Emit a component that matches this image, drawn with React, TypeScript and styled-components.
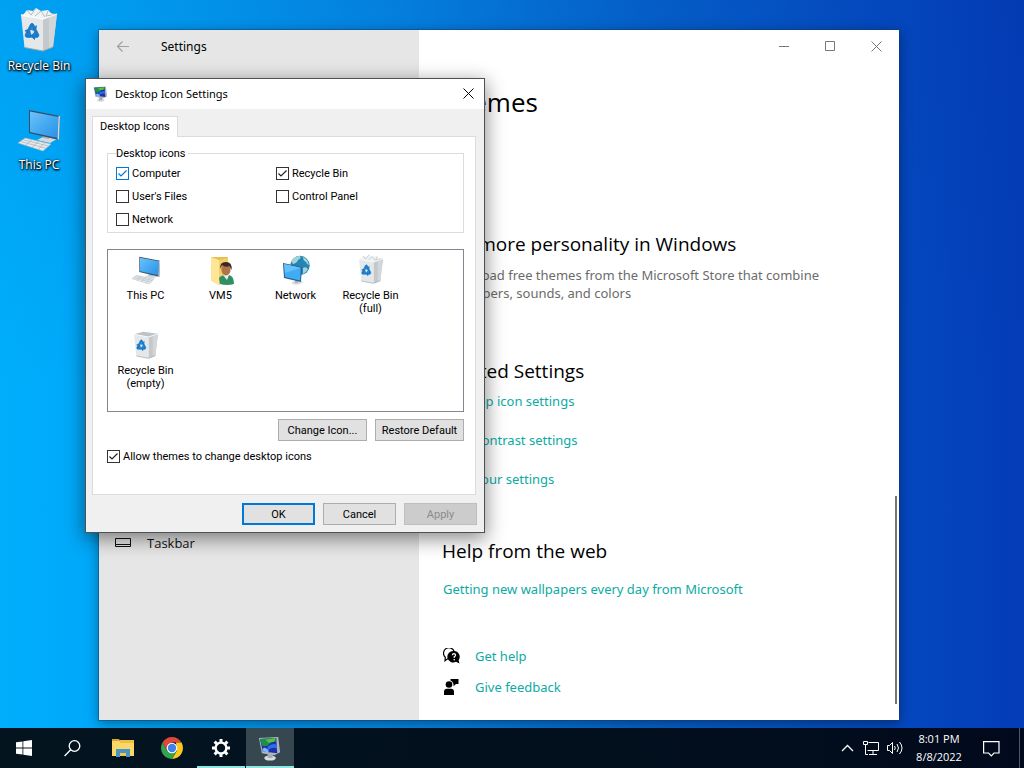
import React from 'react';
import styled, { createGlobalStyle, css } from 'styled-components';

const GlobalStyle = createGlobalStyle`
  *, *::before, *::after { box-sizing: border-box; }
  body { margin: 0; }
  button, input { font: inherit; }
`;

const uiFont = `'Noto Sans', 'Open Sans', sans-serif`;
const headingFont = `'Open Sans', 'Noto Sans', sans-serif`;
const dialogFont = `Roboto, 'Liberation Sans', sans-serif`;

/* ---------- Desktop ---------- */

const Desktop = styled.div`
  min-height: 100vh;
  display: flex;
  flex-direction: column;
  overflow: hidden;
  font-family: ${uiFont};
  font-size: 12px;
  color: #000;
  background:
    linear-gradient(180deg, rgba(0, 50, 150, 0.1) 0%, rgba(0, 50, 150, 0) 50%),
    linear-gradient(90deg, #00aefc 0%, #00a6f8 12%, #0488e6 38%, #0560cc 65%, #0448c0 88%, #033cb6 100%);
`;

const Workspace = styled.main`
  position: relative;
  flex: 1;
`;

const Shortcuts = styled.nav`
  display: flex;
  flex-direction: column;
  gap: 30px;
  width: 78px;
  padding-top: 7px;
`;

const Shortcut = styled.button`
  display: flex;
  flex-direction: column;
  align-items: center;
  gap: 0;
  padding: 0;
  border: 0;
  background: none;
  color: #fff;
  font-family: ${headingFont};
  font-size: 12px;
  line-height: 21px;
  text-shadow: 0 1px 2px #000, 1px 1px 2px #000, 0 0 3px rgba(0, 0, 0, 0.7);
`;

/* ---------- Settings window ---------- */

const SettingsWindow = styled.section`
  position: absolute;
  top: 30px;
  right: 125px;
  bottom: 8px;
  left: 99px;
  display: flex;
  background: #fff;
  box-shadow: 0 0 0 1px rgba(20, 60, 110, 0.45), 0 3px 12px rgba(0, 0, 0, 0.4);
`;

const Sidebar = styled.div`
  display: flex;
  flex-direction: column;
  justify-content: space-between;
  width: 320px;
  background: #e6e6e6;
`;

const SidebarHeader = styled.header`
  display: flex;
  align-items: center;
  gap: 30px;
  height: 33px;
  padding-left: 16px;
`;

const IconButton = styled.button`
  display: grid;
  place-items: center;
  padding: 0;
  border: 0;
  background: none;
  color: inherit;
`;

const WindowTitle = styled.span<{ $size: number }>`
  font-size: ${(p) => p.$size}px;
  line-height: 16px;
`;

const SidebarItem = styled.a`
  display: flex;
  align-items: center;
  gap: 15px;
  margin-bottom: 167px;
  padding-left: 16px;
  color: #111;
  font-family: ${headingFont};
  font-size: 13px;
  line-height: 20px;
  text-decoration: none;
`;

const Content = styled.div`
  position: relative;
  flex: 1;
`;

const Caption = styled.div`
  display: flex;
  justify-content: flex-end;
  color: #777;
`;

const CaptionButton = styled(IconButton)`
  width: 46px;
  height: 32px;
`;

const Page = styled.div`
  padding: 22px 23px 0;
`;

const PageTitle = styled.h1`
  margin: 0 0 110px;
  font-family: ${headingFont};
  font-size: 26px;
  font-weight: 400;
  line-height: 36px;
`;

const Section = styled.section<{ $space: number }>`
  display: flex;
  flex-direction: column;
  align-items: flex-start;
  margin-bottom: ${(p) => p.$space}px;
`;

const Heading = styled.h2<{ $space: number }>`
  margin: 0 0 ${(p) => p.$space}px;
  font-family: ${headingFont};
  font-size: 19px;
  font-weight: 400;
  line-height: 28px;
`;

const Text = styled.p`
  max-width: 400px;
  margin: 0;
  padding-left: 1px;
  color: #6b6b6b;
  font-size: 13px;
  line-height: 18px;
`;

const LinkList = styled.div<{ $gap: number }>`
  display: flex;
  flex-direction: column;
  align-items: flex-start;
  gap: ${(p) => p.$gap}px;
`;

const Link = styled.a`
  display: flex;
  align-items: center;
  gap: 15px;
  padding-left: 1px;
  color: #0caba3;
  font-size: 13px;
  line-height: 20px;
  text-decoration: none;
`;

const ScrollThumb = styled.div`
  position: absolute;
  right: 2px;
  bottom: 16px;
  width: 2px;
  height: 208px;
  background: #767676;
`;

/* ---------- Dialog ---------- */

const Dialog = styled.section`
  position: absolute;
  top: 78px;
  left: 85px;
  width: 400px;
  border: 1px solid #4c5155;
  background: #f0f0f0;
  box-shadow: 0 5px 18px 1px rgba(0, 0, 0, 0.45);
  font-family: ${dialogFont};
  font-size: 11px;
  line-height: 13px;
`;

const DialogHeader = styled.header`
  display: flex;
  align-items: center;
  gap: 6px;
  height: 30px;
  padding: 0 10px 1px 7px;
  background: #fff;
  font-family: ${uiFont};

  ${IconButton} {
    margin-left: auto;
  }
`;

const DialogBody = styled.div`
  padding: 7px 8px 7px 6px;
`;

const Tab = styled.button`
  position: relative;
  display: block;
  height: 21px;
  margin-bottom: -1px;
  padding: 0 7px 1px;
  border: 1px solid #dcdcdc;
  border-bottom: 0;
  background: #fff;
`;

const Panel = styled.div`
  padding: 10px 11px 31px 14px;
  border: 1px solid #dcdcdc;
  background: #fff;
`;

const Group = styled.fieldset`
  display: grid;
  grid-template-columns: 160px 1fr;
  row-gap: 10px;
  margin: 0 0 16px;
  padding: 7px 8px 6px;
  border: 1px solid #dcdcdc;
`;

const Legend = styled.legend`
  padding: 0 3px 0 0;
  line-height: 13px;
`;

const CheckLabel = styled.label`
  display: flex;
  align-items: center;
  gap: 3px;
`;

const CheckBoxFrame = styled.span`
  display: grid;
  width: 13px;
  height: 13px;

  > * {
    grid-area: 1 / 1;
    margin: 0;
    pointer-events: none;
  }
`;

const CheckInput = styled.input<{ $hot: boolean }>`
  width: 13px;
  height: 13px;
  appearance: none;
  border: 1px solid ${(p) => (p.$hot ? '#0078d7' : '#333')};
  background: #fff;
`;

const IconList = styled.ul`
  display: grid;
  grid-template-columns: repeat(4, 75px);
  grid-auto-rows: 75px;
  min-height: 163px;
  margin: 0 0 7px;
  padding: 4px 0 0;
  border: 1px solid #828790;
  list-style: none;
`;

const IconItem = styled.li`
  display: flex;
  flex-direction: column;
  align-items: center;
  gap: 3px;
  text-align: center;
`;

const ButtonRow = styled.div`
  display: flex;
  justify-content: flex-end;
  gap: 8px;
`;

const PushButton = styled.button<{ $width: number; $primary?: boolean }>`
  width: ${(p) => p.$width}px;
  height: 22px;
  padding: 0;
  border: 1px solid #adadad;
  background: #e1e1e1;
  color: #000;

  ${(p) =>
    p.$primary &&
    css`
      border: 2px solid #0078d7;
    `}

  &:disabled {
    border-color: #bfbfbf;
    background: #ccc;
    color: #8b8b8b;
  }
`;

const AllowRow = styled.div`
  display: flex;
  margin-top: 9px;
`;

const DialogFooter = styled(ButtonRow)`
  padding-top: 8px;
  margin-right: -1px;
`;

/* ---------- Taskbar ---------- */

const Taskbar = styled.footer`
  position: relative;
  display: flex;
  justify-content: space-between;
  height: 40px;
  background: linear-gradient(90deg, #03141f, #020f1d 60%, #010a1c);
  color: #fff;
`;

const TaskGroup = styled.div`
  display: flex;
`;

const RunningApps = styled.div`
  display: flex;
  gap: 1px;
  margin-left: 3px;
`;

const TaskButton = styled(IconButton)<{ $running?: boolean; $active?: boolean }>`
  width: 48px;
  height: 40px;
  border-bottom: 2px solid ${(p) => (p.$running ? '#8fe6e2' : 'transparent')};
  border-top: 2px solid transparent;
  background: ${(p) => (p.$active ? '#37474f' : 'none')};
`;

const Tray = styled.div`
  display: flex;
  align-items: center;
`;

const TrayButton = styled(IconButton)`
  width: 24px;
  height: 40px;
`;

const Clock = styled.time`
  width: 64px;
  font-family: ${headingFont};
  font-size: 11px;
  line-height: 18px;
  text-align: center;
`;

const Notifications = styled(IconButton)`
  width: 40px;
  height: 40px;
  margin-right: 8px;
`;

const PeekEdge = styled.span`
  width: 5px;
  height: 40px;
  border-left: 1px solid #4a5663;
`;

/* ---------- Drawings ---------- */

const RecycleArrow = () => (
  <path d="M-3.4 -2.6 L-1.2 -6.4 Q0 -7.6 1.2 -6.4 L2.6 -4.2 L4 -5 L3.4 -0.8 L-0.8 -2 L0.6 -2.9 L0 -4 L-1.2 -1.6 Z" />
);

const RecycleBinIcon = ({ size, full = false }: { size: number; full?: boolean }) => (
  <svg width={size} height={size} viewBox="0 0 48 48" aria-hidden="true">
    <path d="M6 8 L20 4 L42 7 L28 12 Z" fill="#bcc2c6" />
    {full && (
      <g>
        <path d="M8 8 L12 3 L18 4 L21 1 L26 4 L33 3 L38 8 L30 13 L16 11 Z" fill="#f0f3f4" />
        <path d="M12 3 L16 8 L21 1 M20 9 L26 4 L30 10 M33 4 L31 9 L38 8" fill="none" stroke="#b5bcc1" strokeWidth="1" />
      </g>
    )}
    <path d="M6 8 L28 12 L28 44 L9.500 40.500 Z" fill="#e5e8ea" />
    <path d="M28 12 L42 7 L38 40 L28 44 Z" fill="#c3c8cc" />
    <path d="M34 10 L42 7 L38 40 L34 41.500 Z" fill="#d2d6d9" />
    <path d="M6 8 L28 12 L42 7" fill="none" stroke="#f8fafb" strokeWidth="1.300" />
    <path d="M9.500 40.500 L28 44 L38 40" fill="none" stroke="#9da3a8" strokeWidth="1" />
    <g transform="translate(17 25) scale(1.100 1.250)" fill="#1979c9" stroke="#1979c9" strokeWidth=".7">
      <RecycleArrow />
      <g transform="rotate(120)"><RecycleArrow /></g>
      <g transform="rotate(240)"><RecycleArrow /></g>
    </g>
  </svg>
);

const ComputerIcon = ({ size }: { size: number }) => (
  <svg width={size} height={size} viewBox="0 0 48 48" aria-hidden="true">
    <defs>
      <linearGradient id={`pc${size}`} x1="0" y1="0" x2="1" y2="1">
        <stop offset="0" stopColor="#6fc2f8" />
        <stop offset=".5" stopColor="#46aaf2" />
        <stop offset="1" stopColor="#2a90e4" />
      </linearGradient>
    </defs>
    <path d="M22 34 L30 30 L42 33 L35 37 Z" fill="#d5dade" />
    <path d="M28 28 L34 29 L34 33 L28 32 Z" fill="#aab2b8" />
    <path d="M14 4 L45 10 L44 34 L14 27 Z" fill="#34506a" />
    <path d="M15 5.500 L43.500 11 L42.500 32 L15 26 Z" fill={`url(#pc${size})`} />
    <path d="M45 10 L44 34 L42.500 33 L43.500 10 Z" fill="#cfd6db" />
    <path d="M10 32 L36 38 L28 45 L3 37 Z" fill="#e6eaed" stroke="#a7b0b6" strokeWidth=".6" />
    <path d="M8 33.700 L33.500 40 M5.500 35.500 L31 42.300 M17 33.500 L10.500 39.500 M24 35 L17 41.500 M30 36.700 L23 43.500" stroke="#a7b0b6" strokeWidth=".7" />
  </svg>
);

const UserFolderIcon = () => (
  <svg width="32" height="32" viewBox="0 0 32 32" aria-hidden="true">
    <path d="M6 3 L23 3 L23 27 L12 27 Z" fill="#e9bf4f" />
    <path d="M6 3 L14 6 L14 31 L6 27 Z" fill="#ffe596" />
    <path d="M14 6 L23 4 L23 26 L14 31 Z" fill="#f4d06c" />
    <path d="M14 24 Q18 20 24 21 Q29 22 29 30 Q22 32 15 30 Z" fill="#2f8f63" />
    <path d="M18 21 L22 26 L24 21 Z" fill="#e9f1ec" />
    <ellipse cx="21" cy="15.500" rx="4.600" ry="6" fill="#b0744a" />
    <path d="M15.500 15 Q14 8 21 8 Q27.500 8 26.500 16 L24.500 12 Q20 14 17 11 Z" fill="#3a2a20" />
  </svg>
);

const NetworkPlaceIcon = () => (
  <svg width="32" height="32" viewBox="0 0 32 32" aria-hidden="true">
    <circle cx="20" cy="11.500" r="9.700" fill="#2484b4" />
    <path d="M11 7 Q15 2 20 2 Q22 4 18 6 Q17 9 13 10 Z M23 3 Q28 5 29 11 Q27 11 26 8 Q23 7 23 3 Z M23 14 Q26 12 28 15 Q26 19 23 20 Z" fill="#a3d3d6" />
    <path d="M12 28 Q18 25 23 28 Q19 32 12 30 Z" fill="#d5dbe0" />
    <path d="M15 25 L18 25 L18 29 L15 29 Z" fill="#aab2b8" />
    <path d="M3 9 L22 13 L21 28 L4 24 Z" fill="#2b5f8f" />
    <path d="M4 10 L20.700 13.700 L20.200 26.500 L5 23 Z" fill="#40acf4" />
    <path d="M4 10 L20.700 13.700 L5 19 Z" fill="#66c0f9" />
  </svg>
);

const DisplayIcon = ({ size }: { size: number }) => (
  <svg width={size} height={size} viewBox="0 0 24 26" aria-hidden="true">
    <ellipse cx="11.500" cy="23" rx="6" ry="2.600" fill="#d9dde0" />
    <path d="M9 17 L15 18 L14 23 L9 23 Z" fill="#a4abb1" />
    <path d="M0 2 L20 1 L22 17 L16 20 L3 18 Z" fill="#aeb6bd" />
    <path d="M1 3 L18 2 L19 18 L4 16 Z" fill="#1c2fae" />
    <path d="M1 3 L18 2 L18 6 Q14 4 11 8 Q8 12 3 10 Z" fill="#1f8f4c" />
    <path d="M7 4 L17 2 L16 6 L10 7 Z" fill="#59c33f" />
    <path d="M9 11 Q14 7 18.500 9 L19 13 Q13 11 9 15 Z" fill="#2f6fe6" />
    <path d="M4 13 Q7 11 10 15 L10 17 L4 16 Z" fill="#7fb8f4" />
  </svg>
);

const BackArrow = () => (
  <svg width="16" height="16" viewBox="0 0 16 16" fill="none" stroke="#a0a0a0" strokeWidth="1.200" aria-hidden="true">
    <path d="M14 7.500 H2.500 M7.500 2.500 L2.500 7.500 L7.500 12.500" />
  </svg>
);

const MinimizeGlyph = () => (
  <svg width="11" height="11" fill="none" stroke="currentColor" aria-hidden="true"><path d="M0 5.500 H10" /></svg>
);
const MaximizeGlyph = () => (
  <svg width="11" height="11" fill="none" stroke="currentColor" aria-hidden="true"><path d="M.5 .5 H9.500 V9.500 H.5 Z" /></svg>
);
const CloseGlyph = () => (
  <svg width="11" height="11" fill="none" stroke="currentColor" aria-hidden="true"><path d="M.5 .5 L10.500 10.500 M10.500 .5 L.5 10.500" /></svg>
);

const TaskbarGlyph = () => (
  <svg width="17" height="17" fill="none" stroke="#111" aria-hidden="true">
    <path d="M.5 3.500 H15.500 V11.500 H.5 Z M.5 9.500 H15.500" />
  </svg>
);

const HelpGlyph = () => (
  <svg width="17" height="16" viewBox="0 0 17 16" aria-hidden="true">
    <path d="M5 10.500 L2 12.800 L2.300 9.300 A5.500 5.500 0 1 1 11.300 3.800" fill="none" stroke="#000" strokeWidth="1.200" />
    <path d="M11 3 A5.800 5.800 0 1 0 13 13.800 L16.500 15.500 L15.600 12.200 A5.800 5.800 0 0 0 11 3 Z" fill="#000" />
    <path d="M9.300 7.200 Q9.500 5.600 11 5.600 Q12.700 5.800 12.600 7.200 Q12.400 8.200 11.200 8.800 V10" fill="none" stroke="#fff" strokeWidth="1.200" />
    <circle cx="11.200" cy="11.700" r=".8" fill="#fff" />
  </svg>
);

const FeedbackGlyph = () => (
  <svg width="17" height="18" viewBox="0 0 17 18" aria-hidden="true">
    <circle cx="6" cy="6.500" r="3.300" />
    <path d="M1 17 V14 Q1 10.800 4 10.800 H8 Q11 10.800 11 14 V17 Z" />
    <path d="M7.500 1 H15.500 V6 H13 L10.500 8.300 V6 L10 5 Q9.500 3 7.500 2.500 Z" />
  </svg>
);

const StartGlyph = () => (
  <svg width="16" height="16" viewBox="0 0 16 16" fill="#fff" aria-hidden="true">
    <path d="M0 2.300 L6.500 1.400 V7.600 H0 Z M7.300 1.300 L16 0 V7.600 H7.300 Z M0 8.400 H6.500 V14.600 L0 13.700 Z M7.300 8.400 H16 V16 L7.300 14.700 Z" />
  </svg>
);

const SearchGlyph = () => (
  <svg width="17" height="17" viewBox="0 0 17 17" fill="none" stroke="#fff" strokeWidth="1.300" aria-hidden="true">
    <circle cx="10.500" cy="6" r="5.300" />
    <path d="M6.700 9.800 L.6 16" />
  </svg>
);

const ExplorerIcon = () => (
  <svg width="22" height="18" viewBox="0 0 22 18" aria-hidden="true">
    <path d="M0 0 H7 L9 3 H0 Z" fill="#dca42c" />
    <path d="M0 2 H22 V17 H0 Z" fill="#fbd767" />
    <path d="M8 1 H22 V4 H8 Z" fill="#f0bd45" />
    <path d="M4 10 H18 V18 H14 V14 H8 V18 H4 Z" fill="#4695c4" />
    <path d="M8 14 H14 V17 H8 Z" fill="#f3c74e" />
  </svg>
);

const ChromeIcon = () => (
  <svg width="22" height="22" viewBox="0 0 22 22" aria-hidden="true">
    <path d="M1.500 5.500 A11 11 0 0 1 20.500 5.500 H11 L6.200 13.700 Z" fill="#e0463a" />
    <path d="M20.500 5.500 A11 11 0 0 1 11 22 L15.800 13.700 L15 5.500 Z" fill="#fbc91c" />
    <path d="M1.500 5.500 A11 11 0 0 0 11 22 L15.800 13.700 L6.200 13.700 Z" fill="#35a250" />
    <circle cx="11" cy="11" r="5.300" fill="#fff" />
    <circle cx="11" cy="11" r="4.200" fill="#3f80ea" />
  </svg>
);

const GearGlyph = () => (
  <svg width="18" height="18" viewBox="0 0 18 18" fill="none" stroke="#fff" aria-hidden="true">
    <circle cx="9" cy="9" r="5.400" strokeWidth="2.400" />
    <g strokeWidth="3">
      {[0, 45, 90, 135, 180, 225, 270, 315].map((angle) => (
        <path key={angle} d="M9 3 V0" transform={`rotate(${angle} 9 9)`} />
      ))}
    </g>
  </svg>
);

const ChevronGlyph = () => (
  <svg width="13" height="8" fill="none" stroke="#fff" strokeWidth="1.300" aria-hidden="true"><path d="M1 7 L6.500 1.500 L12 7" /></svg>
);

const WiredGlyph = () => (
  <svg width="17" height="15" fill="none" stroke="#fff" aria-hidden="true">
    <path d="M5.500 1.500 H15.500 V9.500 H4.500 M10 9.500 V13 M6 13.500 H14 M.5 .5 H4.500 V3.500 H.5 Z M2.500 3.500 V13.500 H5" />
  </svg>
);

const SpeakerGlyph = () => (
  <svg width="17" height="14" fill="none" stroke="#fff" aria-hidden="true">
    <path d="M.5 4.500 H2.500 L5.500 1.500 V12.500 L2.500 9.500 H.5 Z" />
    <path d="M7.500 5 Q9 7 7.500 9 M10 3 Q13 7 10 11 M12.500 1 Q17.500 7 12.500 13" />
  </svg>
);

const NoteGlyph = () => (
  <svg width="17" height="17" fill="none" stroke="#fff" strokeWidth="1.200" aria-hidden="true">
    <path d="M.6 1.600 H16 V13 H11 L8.300 15.800 L5.600 13 H.6 Z" />
  </svg>
);

/* ---------- Composition ---------- */

interface CheckFieldProps {
  label: string;
  checked?: boolean;
  hot?: boolean;
}

const CheckField = ({ label, checked = false, hot = false }: CheckFieldProps) => {
  const [on, setOn] = React.useState(checked);
  return (
    <CheckLabel>
      <CheckBoxFrame>
        <CheckInput type="checkbox" $hot={hot} checked={on} onChange={() => setOn(!on)} />
        {on && (
          <svg width="13" height="13" fill="none" stroke={hot ? '#0078d7' : '#222'} strokeWidth="1.200" aria-hidden="true">
            <path d="M2.500 6.500 L5 9 L10.500 3.500" />
          </svg>
        )}
      </CheckBoxFrame>
      {label}
    </CheckLabel>
  );
};

export default function App() {
  return (
    <Desktop>
      <GlobalStyle />
      <Workspace>
        <Shortcuts>
          <Shortcut><RecycleBinIcon size={48} full />Recycle Bin</Shortcut>
          <Shortcut><ComputerIcon size={48} />This PC</Shortcut>
        </Shortcuts>

        <SettingsWindow>
          <Sidebar>
            <SidebarHeader>
              <IconButton aria-label="Back"><BackArrow /></IconButton>
              <WindowTitle $size={12}>Settings</WindowTitle>
            </SidebarHeader>
            <SidebarItem href="#taskbar"><TaskbarGlyph />Taskbar</SidebarItem>
          </Sidebar>
          <Content>
            <Caption>
              <CaptionButton aria-label="Minimize"><MinimizeGlyph /></CaptionButton>
              <CaptionButton aria-label="Maximize"><MaximizeGlyph /></CaptionButton>
              <CaptionButton aria-label="Close"><CloseGlyph /></CaptionButton>
            </Caption>
            <Page>
              <PageTitle>Themes</PageTitle>
              <Section $space={55}>
                <Heading $space={8}>Get more personality in Windows</Heading>
                <Text>Download free themes from the Microsoft Store that combine wallpapers, sounds, and colors</Text>
              </Section>
              <Section $space={48}>
                <Heading $space={6}>Related Settings</Heading>
                <LinkList $gap={19}>
                  <Link href="#icons">Desktop icon settings</Link>
                  <Link href="#contrast">High contrast settings</Link>
                  <Link href="#sync">Sync your settings</Link>
                </LinkList>
              </Section>
              <Section $space={47}>
                <Heading $space={14}>Help from the web</Heading>
                <Link href="#wallpapers">Getting new wallpapers every day from Microsoft</Link>
              </Section>
              <LinkList $gap={11}>
                <Link href="#help"><HelpGlyph />Get help</Link>
                <Link href="#feedback"><FeedbackGlyph />Give feedback</Link>
              </LinkList>
            </Page>
            <ScrollThumb />
          </Content>
        </SettingsWindow>

        <Dialog role="dialog" aria-label="Desktop Icon Settings">
          <DialogHeader>
            <DisplayIcon size={16} />
            <WindowTitle $size={11}>Desktop Icon Settings</WindowTitle>
            <IconButton aria-label="Close dialog"><CloseGlyph /></IconButton>
          </DialogHeader>
          <DialogBody>
            <Tab>Desktop Icons</Tab>
            <Panel>
              <Group>
                <Legend>Desktop icons</Legend>
                <CheckField label="Computer" checked hot />
                <CheckField label="Recycle Bin" checked />
                <CheckField label="User's Files" />
                <CheckField label="Control Panel" />
                <CheckField label="Network" />
              </Group>
              <IconList>
                <IconItem><ComputerIcon size={32} />This PC</IconItem>
                <IconItem><UserFolderIcon />VM5</IconItem>
                <IconItem><NetworkPlaceIcon />Network</IconItem>
                <IconItem><RecycleBinIcon size={32} full />Recycle Bin (full)</IconItem>
                <IconItem><RecycleBinIcon size={32} />Recycle Bin (empty)</IconItem>
              </IconList>
              <ButtonRow>
                <PushButton $width={89}>Change Icon...</PushButton>
                <PushButton $width={89}>Restore Default</PushButton>
              </ButtonRow>
              <AllowRow>
                <CheckField label="Allow themes to change desktop icons" checked />
              </AllowRow>
            </Panel>
            <DialogFooter>
              <PushButton $width={73} $primary>OK</PushButton>
              <PushButton $width={73}>Cancel</PushButton>
              <PushButton $width={73} disabled>Apply</PushButton>
            </DialogFooter>
          </DialogBody>
        </Dialog>
      </Workspace>

      <Taskbar>
        <TaskGroup>
          <TaskButton aria-label="Start"><StartGlyph /></TaskButton>
          <TaskButton aria-label="Search"><SearchGlyph /></TaskButton>
          <RunningApps>
            <TaskButton aria-label="File Explorer"><ExplorerIcon /></TaskButton>
            <TaskButton aria-label="Chrome"><ChromeIcon /></TaskButton>
            <TaskButton aria-label="Settings" $running><GearGlyph /></TaskButton>
            <TaskButton aria-label="Desktop Icon Settings" $running $active><DisplayIcon size={25} /></TaskButton>
          </RunningApps>
        </TaskGroup>
        <Tray>
          <TrayButton aria-label="Show hidden icons"><ChevronGlyph /></TrayButton>
          <TrayButton aria-label="Network"><WiredGlyph /></TrayButton>
          <TrayButton aria-label="Volume"><SpeakerGlyph /></TrayButton>
          <Clock>8:01 PM<br />8/8/2022</Clock>
          <Notifications aria-label="Notifications"><NoteGlyph /></Notifications>
          <PeekEdge />
        </Tray>
      </Taskbar>
    </Desktop>
  );
}
